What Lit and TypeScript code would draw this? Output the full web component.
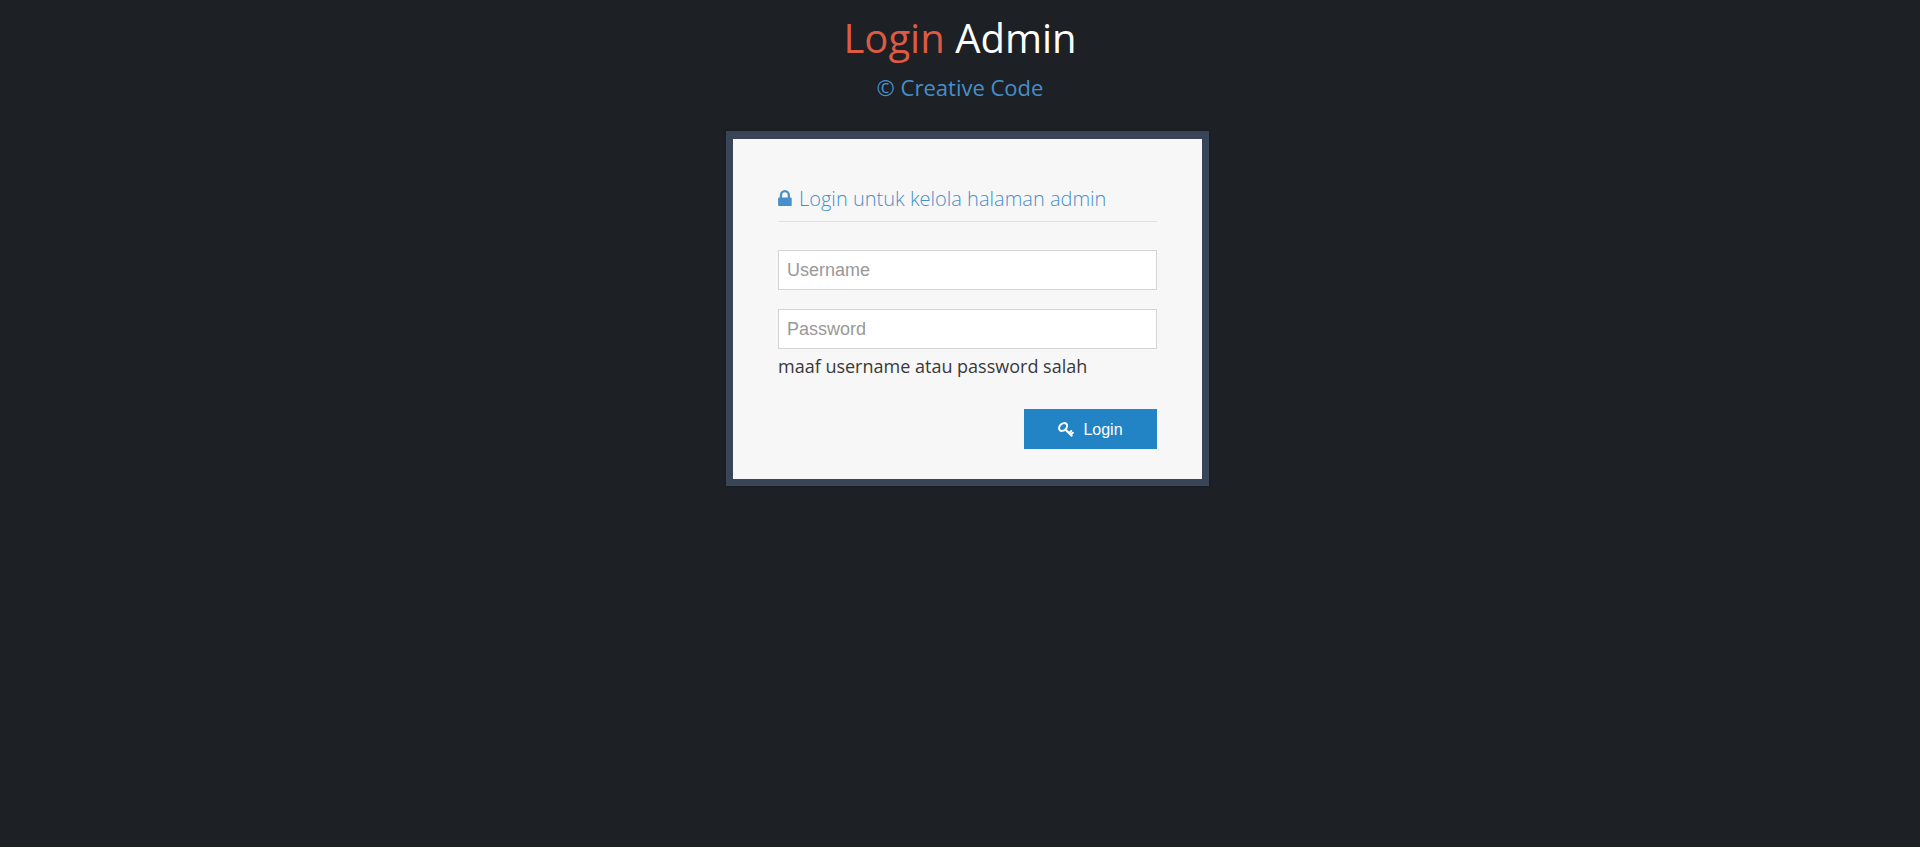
import { LitElement, html, css } from "lit";
import { customElement } from "lit/decorators.js";

@customElement("app-root")
export class AppRoot extends LitElement {
  static styles = css`
    :host {
      display: block;
      min-height: 100vh;
      background: #1d2024;
      color: #393939;
      font-family: "Open Sans", "Noto Sans", sans-serif;
      font-size: 18px;
      line-height: 24px;
    }
    * {
      box-sizing: border-box;
    }
    .brand {
      padding-top: 13px;
      text-align: center;
    }
    .title {
      margin: 0;
      color: #fff;
      font-size: 40px;
      line-height: 50px;
      font-weight: 400;
    }
    .accent {
      color: #dd5a43;
    }
    .company {
      margin: 8px 0 0;
      color: #478fca;
      font-size: 22px;
      line-height: 32px;
      font-weight: 400;
    }
    .container {
      width: 468px;
      margin: 28px auto 0;
    }
    .card {
      width: 483px;
      padding: 45px 45px 30px;
      background: #f7f7f7;
      border: solid #394557;
      border-width: 8px 7px 7px;
      box-shadow: 0 0 2px 1px rgba(0, 0, 0, 0.12);
    }
    .heading {
      display: flex;
      align-items: center;
      gap: 7px;
      margin: 0 0 28px;
      padding-bottom: 8px;
      border-bottom: 1px solid #d5e3ef;
      color: #478fca;
      font-size: 20px;
      line-height: 29px;
      font-weight: 300;
    }
    .icon {
      display: block;
      fill: currentColor;
    }
    .lock {
      margin-bottom: 2px;
    }
    .field {
      display: block;
      width: 100%;
      height: 40px;
      margin: 0 0 19px;
      padding: 0 8px;
      background: #fff;
      border: 1px solid #d5d5d5;
      border-radius: 0;
      color: #858585;
      font: 18px "Liberation Sans", Arial, sans-serif;
    }
    .field::placeholder {
      color: #999;
      opacity: 1;
    }
    .field.last {
      margin-bottom: 5px;
    }
    .error {
      margin: 0 0 31px;
    }
    .actions {
      display: flex;
      justify-content: flex-end;
    }
    .submit {
      display: flex;
      align-items: center;
      justify-content: center;
      gap: 9px;
      width: 133px;
      height: 40px;
      padding: 1px 0 0;
      background: #2283c5;
      border: 0;
      color: #fff;
      font: 16px "Liberation Sans", Arial, sans-serif;
      cursor: pointer;
    }
  `;

  render() {
    return html`
      <main>
        <header class="brand">
          <h1 class="title"><span class="accent">Login</span> Admin</h1>
          <h4 class="company">© Creative Code</h4>
        </header>
        <div class="container">
          <form class="card" @submit=${(e: Event) => e.preventDefault()}>
            <h4 class="heading">
              <svg class="icon lock" width="14" height="16" viewBox="0 0 14 16" aria-hidden="true">
                <path d="M1 7.5h.8V5.2a5.1 5.2 0 0 1 10.2 0v2.3h.8q.9 0 .9.9v6.7q0 .9-.9.9H1q-.9 0-.9-.9V8.400q0-.9.9-.9zM4.100 7.500h5.600V5.200a2.800 2.900 0 0 0-5.600 0z" />
              </svg>
              Login untuk kelola halaman admin
            </h4>
            <input class="field" type="text" placeholder="Username" aria-label="Username" />
            <input class="field last" type="password" placeholder="Password" aria-label="Password" />
            <p class="error">maaf username atau password salah</p>
            <div class="actions">
              <button class="submit" type="submit">
                <svg class="icon" width="16" height="16" viewBox="0 0 16 16" aria-hidden="true">
                  <g fill="none" stroke="currentColor">
                    <ellipse cx="5.100" cy="5" rx="4.500" ry="3.300" stroke-width="2" transform="rotate(-42 5.100 5)" />
                    <path stroke-width="2.200" stroke-linecap="round" d="M7.600 7.800l6 5.800" />
                    <path stroke-width="1.900" stroke-linecap="round" d="M11.200 11l2-2M13.200 12.200l1.600-1.500" />
                  </g>
                </svg>
                Login
              </button>
            </div>
          </form>
        </div>
      </main>
    `;
  }
}
